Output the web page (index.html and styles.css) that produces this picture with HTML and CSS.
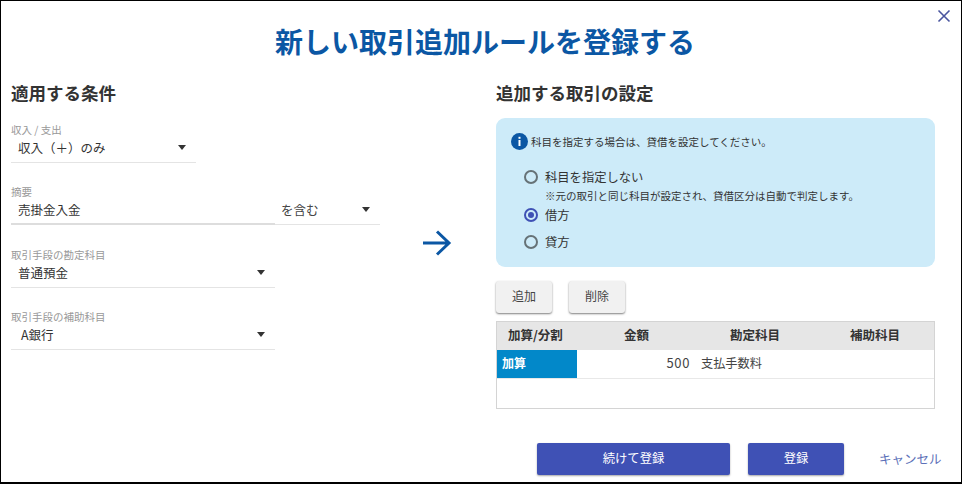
FILE: index.html
```html
<!DOCTYPE html>
<html lang="ja">
<head>
<meta charset="utf-8">
<title>新しい取引追加ルールを登録する</title>
<link rel="stylesheet" href="styles.css">
</head>
<body>
<div class="dialog">
  <button class="close" aria-label="閉じる">
    <svg width="14" height="14" viewBox="0 0 14 14"><path d="M1.500 1.500l11 11M12.500 1.500l-11 11" fill="none" stroke="#4a559f" stroke-width="1.600"/></svg>
  </button>
  <h1 class="title">新しい取引追加ルールを登録する</h1>
  <div class="main">
    <section class="left">
      <h2 class="heading">適用する条件</h2>
      <div class="field w-short">
        <div class="label">収入 / 支出</div>
        <div class="select"><span>収入（＋）のみ</span><i class="caret"></i></div>
      </div>
      <div class="field-row">
        <div class="field w-long">
          <div class="label">摘要</div>
          <div class="select strong"><span>売掛金入金</span></div>
        </div>
        <div class="select contains"><span>を含む</span><i class="caret"></i></div>
      </div>
      <div class="field w-long">
        <div class="label">取引手段の勘定科目</div>
        <div class="select"><span>普通預金</span><i class="caret"></i></div>
      </div>
      <div class="field w-long">
        <div class="label">取引手段の補助科目</div>
        <div class="select"><span class="bank">A銀行</span><i class="caret"></i></div>
      </div>
    </section>
    <div class="arrow">
      <svg width="30" height="26" viewBox="0 0 30 26"><path d="M0 13h26M14 1.500L26 13 14 24.500" fill="none" stroke="#0b57a4" stroke-width="3"/></svg>
    </div>
    <section class="right">
      <h2 class="heading">追加する取引の設定</h2>
      <div class="panel">
        <div class="info">
          <svg width="17" height="17" viewBox="0 0 17 17"><circle cx="8.500" cy="8.500" r="8.500" fill="#0b57a4"/><rect x="7.500" y="7" width="2" height="6" fill="#fff"/><rect x="7.500" y="3.800" width="2" height="2" fill="#fff"/></svg>
          <span>科目を指定する場合は、貸借を設定してください。</span>
        </div>
        <div class="radios">
          <div class="radio first"><i class="dot"></i><span>科目を指定しない</span></div>
          <div class="note">※元の取引と同じ科目が設定され、貸借区分は自動で判定します。</div>
          <div class="radio second"><i class="dot on"></i><span>借方</span></div>
          <div class="radio third"><i class="dot"></i><span>貸方</span></div>
        </div>
      </div>
      <div class="tools">
        <button class="tool">追加</button>
        <button class="tool">削除</button>
      </div>
      <div class="table">
        <div class="tr th"><div class="c1">加算/分割</div><div class="c2">金額</div><div class="c3">勘定科目</div><div class="c4">補助科目</div></div>
        <div class="tr"><div class="c1 kind">加算</div><div class="c2 amount">500</div><div class="c3 account">支払手数料</div><div class="c4"></div></div>
        <div class="tr last"></div>
      </div>
      <div class="footer">
        <button class="primary wide">続けて登録</button>
        <button class="primary narrow">登録</button>
        <a class="cancel">キャンセル</a>
      </div>
    </section>
  </div>
</div>
</body>
</html>
```
FILE: styles.css
```css
* { box-sizing: border-box; }
html, body { margin: 0; padding: 0; background: #fff; }
body { font-family: "Noto Sans CJK JP", "Noto Sans", sans-serif; color: #333; width: 962px; height: 484px; overflow: hidden; }
.dialog { position: relative; width: 962px; height: 484px; border: solid #000; border-width: 1px 1px 2px 1px; background: #fff; }
.close { position: absolute; top: 8px; right: 10px; width: 14px; height: 14px; padding: 0; border: 0; background: none; display: block; }
.close svg { display: block; }
.title { margin: 0; padding: 20px 0 0 8px; height: 59px; line-height: 40px; text-align: center; font-size: 28px; font-weight: 700; color: #0b57a4; }
.main { display: flex; }
.left { width: 379px; margin-left: 10px; flex: none; }
.heading { margin: 0; font-size: 17.500px; line-height: 26px; font-weight: 700; color: #333; padding-top: 20px; height: 46px; }
.field { display: block; }
.left > .heading { margin-bottom: 17px; }
.w-short { width: 185px; margin-bottom: 22px; }
.w-long { width: 264px; }
.field-row { display: flex; align-items: flex-end; margin-bottom: 23px; }
.left > .w-long { margin-bottom: 22px; }
.label { font-size: 10.500px; line-height: 14px; color: #999; height: 14px; }
.select { display: flex; align-items: center; justify-content: space-between; height: 26px; padding: 0 10px 4px 7px; border-bottom: 1px solid #e4e4e4; font-size: 12.500px; color: #333; line-height: 20px; }
.select.strong { border-bottom: 2px solid #ddd; padding-bottom: 3px; }
.contains { width: 105px; padding-left: 6px; padding-right: 10px; color: #444; }
.bank { padding-left: 3px; }
.caret { width: 0; height: 0; border: solid transparent; border-width: 5px 4px 0; border-top-color: #333; display: block; }
.arrow { width: 117px; flex: none; display: flex; justify-content: flex-start; padding-top: 170px; padding-left: 33px; }
.arrow svg { display: block; }
.right { width: 439px; flex: none; margin-left: -11px; }
.right > .heading { margin-bottom: 12px; }
.panel { height: 149px; background: #cdebf9; border-radius: 9px; padding: 15px 0 0 15px; }
.info { display: flex; align-items: center; gap: 3px; font-size: 10.500px; line-height: 17px; color: #333; }
.info svg { flex: none; display: block; }
.radios { padding: 0 0 0 13px; }
.radio { display: flex; align-items: center; gap: 7px; font-size: 12.300px; line-height: 18px; color: #333; }
.first { margin-top: 18px; }
.second { margin-top: 3px; }
.third { margin-top: 9px; }
.note { padding-left: 21px; margin-top: 3px; font-size: 10.500px; line-height: 14px; color: #333; }
.dot { width: 14px; height: 14px; border-radius: 50%; border: 2px solid #667277; display: block; flex: none; position: relative; }
.dot.on { border-color: #3f51b5; }
.dot.on::after { content: ""; position: absolute; left: 2px; top: 2px; width: 6px; height: 6px; border-radius: 50%; background: #3f51b5; }
.tools { display: flex; gap: 17px; margin-top: 14px; }
.tool { width: 56px; height: 32px; padding: 0 0 3px; border: 0; border-radius: 3px; background: #f1f1f1; box-shadow: 0 1px 2px rgba(0,0,0,.5); font: 400 12px/28px "Noto Sans CJK JP", sans-serif; color: #444; }
.table { margin-top: 8px; border: 1px solid #d4d4d4; height: 88px; }
.tr { display: flex; height: 29px; border-bottom: 1px solid #e8e8e8; font-size: 12px; line-height: 26px; }
.tr.last { height: 28px; border-bottom: 0; }
.th { background: #e6e6e6; font-weight: 700; font-size: 12.500px; color: #333; border-bottom: 0; height: 28px; }
.c1 { width: 80px; flex: none; }
.c2 { width: 113px; flex: none; }
.c3 { width: 125px; flex: none; }
.c4 { flex: 1; }
.th .c1 { padding-left: 11px; }
.th .c2 { padding-left: 47px; }
.th .c3 { padding-left: 40px; }
.th .c4 { padding-left: 35px; }
.kind { background: #0288c9; color: #fff; font-weight: 700; padding-left: 5px; }
.amount { text-align: right; font-size: 13px; letter-spacing: .6px; color: #444; }
.account { padding-left: 11px; color: #444; font-size: 12.200px; }
.footer { display: flex; align-items: center; margin-top: 34px; padding-left: 41px; }
.primary { flex: none; height: 32px; padding: 0 0 2px; border: 0; border-radius: 2px; background: #3f51b5; color: #fff; box-shadow: 0 1px 2px rgba(0,0,0,.35); font: 400 12.300px/30px "Noto Sans CJK JP", sans-serif; }
.wide { width: 193px; }
.narrow { width: 96px; margin-left: 18px; }
.cancel { flex: none; margin-left: 35px; font-size: 12.500px; line-height: 30px; color: #5c70b8; white-space: nowrap; }
```
